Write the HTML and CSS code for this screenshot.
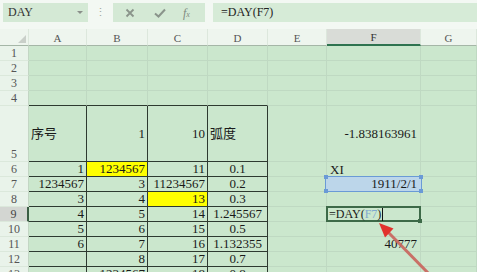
FILE: index.html
```html
<!DOCTYPE html>
<html lang="zh">
<head>
<meta charset="utf-8">
<title>DAY</title>
<link rel="stylesheet" href="styles.css">
</head>
<body>
<div class="toolbar">
  <div class="namebox"><span>DAY</span><span class="caret"></span></div>
  <div class="dots">⋮</div>
  <div class="fnbox">
    <svg class="ico" width="10" height="10" viewBox="0 0 10 10"><path d="M1.5 1.5 L8.5 8.5 M8.5 1.5 L1.5 8.5" stroke="#8a948b" stroke-width="1.8" fill="none"/></svg>
    <svg class="ico chk" width="12" height="10" viewBox="0 0 12 10"><path d="M1 5.5 L4.5 8.5 L11 1.5" stroke="#8a948b" stroke-width="2" fill="none"/></svg>
    <span class="fx">f<small>x</small></span>
  </div>
  <div class="formula">=DAY(F7)</div>
</div>
<div class="strip"></div>
<div class="sheet">
  <div class="h corner"><span class="tri"></span></div>
  <div class="h">A</div><div class="h">B</div><div class="h">C</div><div class="h">D</div><div class="h">E</div><div class="h hsel">F</div><div class="h">G</div>

  <div class="rh">1</div><div class="c"></div><div class="c"></div><div class="c"></div><div class="c"></div><div class="c"></div><div class="c"></div><div class="c"></div>
  <div class="rh">2</div><div class="c"></div><div class="c"></div><div class="c"></div><div class="c"></div><div class="c"></div><div class="c"></div><div class="c"></div>
  <div class="rh">3</div><div class="c"></div><div class="c"></div><div class="c"></div><div class="c"></div><div class="c"></div><div class="c"></div><div class="c"></div>
  <div class="rh">4</div><div class="c tb"></div><div class="c tb"></div><div class="c tb"></div><div class="c tb"></div><div class="c"></div><div class="c"></div><div class="c"></div>

  <div class="rh">5</div><div class="c t l">序号</div><div class="c t n">1</div><div class="c t n">10</div><div class="c t l">弧度</div><div class="c"></div><div class="c n f">-1.838163961</div><div class="c"></div>

  <div class="rh">6</div><div class="c t n">1</div><div class="c t n y">1234567</div><div class="c t n">11</div><div class="c t m">0.1</div><div class="c"></div><div class="c l xi">XI</div><div class="c"></div>
  <div class="rh">7</div><div class="c t n">1234567</div><div class="c t n">3</div><div class="c t n">11234567</div><div class="c t m">0.2</div><div class="c"></div><div class="c n f refcell"><div class="ref"><i class="hd tl"></i><i class="hd tr"></i><i class="hd bl"></i><i class="hd br"></i></div><span class="rv">1911/2/1</span></div><div class="c"></div>
  <div class="rh">8</div><div class="c t n">3</div><div class="c t n">4</div><div class="c t n y">13</div><div class="c t m">0.3</div><div class="c"></div><div class="c"></div><div class="c"></div>
  <div class="rh rsel">9</div><div class="c t n">4</div><div class="c t n">5</div><div class="c t n">14</div><div class="c t m">1.245567</div><div class="c"></div><div class="c editcell"><div class="edit">=DAY(<span class="fref">F7</span>)<span class="cur"></span><i class="fill"></i></div></div><div class="c"></div>
  <div class="rh">10</div><div class="c t n">5</div><div class="c t n">6</div><div class="c t n">15</div><div class="c t m">0.5</div><div class="c"></div><div class="c"></div><div class="c"></div>
  <div class="rh">11</div><div class="c t n">6</div><div class="c t n">7</div><div class="c t n">16</div><div class="c t m">1.132355</div><div class="c"></div><div class="c n f">40777</div><div class="c"></div>
  <div class="rh">12</div><div class="c t"></div><div class="c t n">8</div><div class="c t n">17</div><div class="c t m">0.7</div><div class="c"></div><div class="c"></div><div class="c"></div>
  <div class="rh">13</div><div class="c t"></div><div class="c t n">1234567</div><div class="c t n">18</div><div class="c t m">0.8</div><div class="c"></div><div class="c"></div><div class="c"></div>
</div>
<svg class="arrow" width="477" height="272" viewBox="0 0 477 272">
  <line x1="431" y1="276" x2="387" y2="231" stroke="#c9645c" stroke-width="3" opacity="0.9"/>
  <polygon points="379,223 393.5,228.5 385,237.5" fill="#e2322d"/>
</svg>
</body>
</html>
```

FILE: styles.css
```css
* { box-sizing: border-box; }
html, body { margin: 0; padding: 0; }
body {
  width: 477px;
  height: 272px;
  overflow: hidden;
  position: relative;
  background: #f3f8f3;
  font-family: "Liberation Serif", "Noto Sans CJK SC", serif;
  color: #1a1a1a;
}

/* toolbar */
.toolbar {
  height: 22px;
  display: flex;
  align-items: flex-end;
  padding-left: 3px;
}
.namebox {
  width: 85px;
  height: 19px;
  background: #d4e9d5;
  display: flex;
  align-items: center;
  justify-content: space-between;
  padding: 0 5px 0 5px;
  font-size: 12px;
  color: #333;
}
.caret {
  width: 0;
  height: 0;
  border-left: 3px solid transparent;
  border-right: 3px solid transparent;
  border-top: 3px solid #8a8f8a;
}
.dots {
  width: 25px;
  height: 19px;
  display: flex;
  align-items: center;
  justify-content: center;
  color: #a0a6a0;
  font-size: 11px;
}
.fnbox {
  width: 92px;
  height: 19px;
  background: #d4e9d5;
  display: flex;
  align-items: center;
  padding-left: 12px;
}
.ico { display: block; }
.chk { margin-left: 19px; }
.fx {
  margin-left: 17px;
  font-style: italic;
  font-size: 12px;
  color: #7f8a80;
  line-height: 1;
}
.fx small { font-size: 8px; }
.formula {
  margin-left: 8px;
  flex: 1;
  height: 19px;
  background: #d6ebd7;
  padding-left: 8px;
  font-size: 12px;
  display: flex;
  align-items: center;
  color: #222;
}
.strip { height: 7px; }

/* sheet */
.sheet {
  display: grid;
  grid-template-columns: 29px 58px 61px 60px 60px 59px 94px 56px;
  grid-template-rows: 17px 15px 15px 15px 15px 56px repeat(8, 15px);
  font-size: 13px;
}
.h {
  background: #eef5ee;
  border-bottom: 1px solid #a5b6a7;
  border-right: 1px solid #dce7dc;
  font-size: 11px;
  color: #555;
  display: flex;
  align-items: center;
  justify-content: center;
  padding-top: 1px;
}
.corner { position: relative; }
.tri {
  position: absolute;
  right: 2px;
  bottom: 2px;
  width: 0;
  height: 0;
  border-left: 8px solid transparent;
  border-bottom: 8px solid #c9cfc9;
}
.hsel {
  background: #d9dcd7;
  border-bottom: 2px solid #2f7350;
  color: #333;
}
.rh {
  background: #e9f3ea;
  border-right: 1px solid #c3d6c4;
  border-bottom: 1px solid #dbe8db;
  font-size: 12px;
  color: #555;
  display: flex;
  align-items: flex-end;
  justify-content: center;
  line-height: 14px;
}
.rsel {
  background: #d3d6d2;
  border-right: 2px solid #3b5e44;
  color: #444;
}
.c {
  background: #cbe7cd;
  border-right: 1px solid #bfd9c2;
  border-bottom: 1px solid #bfd9c2;
  display: flex;
  align-items: center;
  white-space: nowrap;
  line-height: 14px;
}
.t {
  border-right-color: #2e3a30;
  border-bottom-color: #2e3a30;
}
.tb { border-bottom-color: #2e3a30; }
.n { justify-content: flex-end; padding-right: 2px; }
.f { padding-right: 3px; }
.l { justify-content: flex-start; padding-left: 2px; }
.xi { padding-left: 3px; align-items: flex-start; padding-top: 1px; }
.m { justify-content: center; }
.y { background: #ffff00; }

/* reference (blue) range on F7 */
.refcell { position: relative; }
.ref {
  position: absolute;
  left: -2px;
  top: -1px;
  right: -2px;
  bottom: -1px;
  border: 1px solid #6a9ad6;
  background: #bcd6ea;
}
.rv { position: relative; }
.hd {
  position: absolute;
  width: 4px;
  height: 4px;
  background: #6a9ad6;
}
.tl { left: -2px; top: -2px; }
.tr { right: -2px; top: -2px; }
.bl { left: -2px; bottom: -2px; }
.br { right: -2px; bottom: -2px; }

/* cell in edit mode */
.editcell { position: relative; }
.edit {
  position: absolute;
  left: -1px;
  top: -1px;
  right: -1px;
  bottom: -1px;
  border: 2px solid #3d6a48;
  padding-left: 1px;
  font-size: 12px;
  line-height: 13px;
  display: flex;
  align-items: center;
  white-space: nowrap;
}
.fref { color: #7fa8cf; }
.cur {
  display: inline-block;
  width: 1px;
  height: 13px;
  background: #111;
  margin-left: 1px;
}
.fill {
  position: absolute;
  right: -3px;
  bottom: -3px;
  width: 4px;
  height: 4px;
  background: #3d6a48;
}

.arrow {
  position: absolute;
  left: 0;
  top: 0;
  pointer-events: none;
}
```
